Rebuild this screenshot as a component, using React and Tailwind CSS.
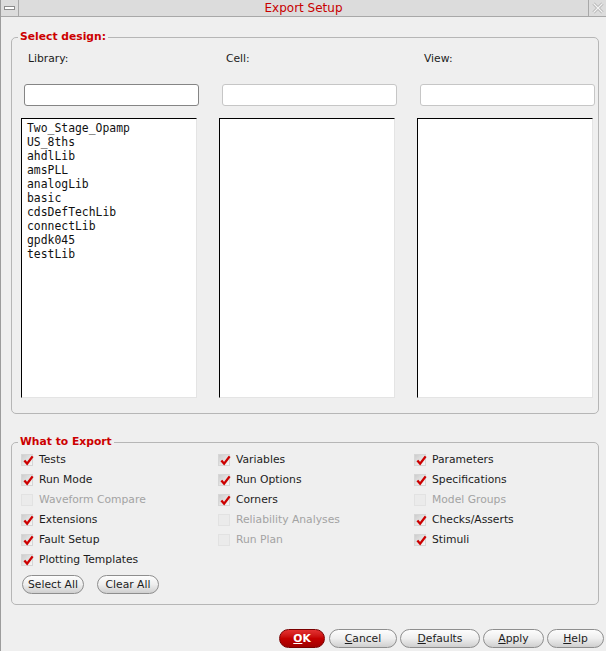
import React from 'react';

const libraries = [
  'Two_Stage_Opamp',
  'US_8ths',
  'ahdlLib',
  'amsPLL',
  'analogLib',
  'basic',
  'cdsDefTechLib',
  'connectLib',
  'gpdk045',
  'testLib',
];

const exportCols = [
  [
    { label: 'Tests', checked: true },
    { label: 'Run Mode', checked: true },
    { label: 'Waveform Compare', disabled: true },
    { label: 'Extensions', checked: true },
    { label: 'Fault Setup', checked: true },
    { label: 'Plotting Templates', checked: true },
  ],
  [
    { label: 'Variables', checked: true },
    { label: 'Run Options', checked: true },
    { label: 'Corners', checked: true },
    { label: 'Reliability Analyses', disabled: true },
    { label: 'Run Plan', disabled: true },
  ],
  [
    { label: 'Parameters', checked: true },
    { label: 'Specifications', checked: true },
    { label: 'Model Groups', disabled: true },
    { label: 'Checks/Asserts', checked: true },
    { label: 'Stimuli', checked: true },
  ],
];

function Check({ label, checked, disabled }) {
  return (
    <div className="flex items-center h-[20px] gap-[6px]">
      <span
        className={`relative w-[12px] h-[12px] shrink-0 ${
          disabled
            ? 'bg-[#ebebeb] border border-[#e2e2e2]'
            : 'bg-linear-to-br from-[#cdcdcd] to-[#f6f6f6] border border-[#d6d6d6]'
        }`}
      >
        {checked && (
          <svg className="absolute left-[1px] top-[0px]" width="11" height="11" viewBox="0 0 12 12">
            <path d="M1.5 6 L4.5 9.5 L10.5 1.5" fill="none" stroke="#cc0000" strokeWidth="2.6" />
          </svg>
        )}
      </span>
      <span className={disabled ? 'text-[#a3a3a3]' : 'text-[#1c1c1c]'}>{label}</span>
    </div>
  );
}

function Btn({ children, className = '' }) {
  return (
    <button
      className={`h-[19px] rounded-full border border-[#8e8e8e] bg-linear-to-b from-[#fdfdfd] via-[#eeeeee] to-[#cfcfcf] text-[10.75px] leading-[17px] text-[#1c1c1c] ${className}`}
    >
      {children}
    </button>
  );
}

export default function App() {
  return (
    <div className="w-[606px] h-[651px] bg-[#efefef] border-l border-[#9c9c9c] font-['DejaVu_Sans',sans-serif] text-[10.75px] text-[#1c1c1c] flex flex-col overflow-hidden">
      {/* title bar */}
      <div className="h-[17px] flex bg-[#dcdcdc] border-b border-[#a8a8a8] shrink-0">
        <div className="w-[18px] border-r border-[#a8a8a8] flex items-center justify-center">
          <span className="w-[11px] h-[4px] bg-white border border-[#8c8c8c]" />
        </div>
        <div className="flex-1 text-center text-[12px] leading-[16px] text-[#c80000]">Export Setup</div>
        <div className="w-[18px] border-l border-[#a8a8a8] flex items-center justify-center">
          <svg width="12" height="12" viewBox="0 0 12 12">
            <path d="M1.5 1.5 L10.5 10.5 M10.5 1.5 L1.5 10.5" stroke="#b4b4b4" strokeWidth="3" />
            <path d="M1.5 1.5 L10.5 10.5 M10.5 1.5 L1.5 10.5" stroke="#f4f4f4" strokeWidth="1.2" />
          </svg>
        </div>
      </div>

      <div className="pl-[10px] pr-[7px]">
        {/* Select design */}
        <fieldset className="mt-[13px] border border-[#b6b6b6] rounded-[5px] pl-[9px] pr-[3px] pb-[15px]">
          <legend className="ml-[-3px] px-[2px] text-[10.75px] leading-[14px] font-bold text-[#cc0000]">Select design:</legend>
          <div className="flex gap-[22px]">
            {['Library:', 'Cell:', 'View:'].map((title, i) => (
              <div key={title} className="w-[176px] flex flex-col">
                <div className="mt-[8px] ml-[7px] leading-[13px]">{title}</div>
                <div
                  className={`mt-[19px] ml-[3px] w-[175px] h-[22px] bg-white rounded-[3px] border ${
                    i === 0 ? 'border-[#858585]' : 'border-[#c6c6c6]'
                  }`}
                />
                <div className="mt-[12px] h-[280px] bg-white border-t border-l border-black border-r border-b border-r-[#e4e4e4] border-b-[#e4e4e4] pt-[2px] pl-[5px] font-['DejaVu_Sans_Mono',monospace] text-[11.4px] leading-[14px] text-[#111]">
                  {i === 0 && libraries.map((lib) => <div key={lib}>{lib}</div>)}
                </div>
              </div>
            ))}
          </div>
        </fieldset>

        {/* What to Export */}
        <fieldset className="mt-[21px] border border-[#b6b6b6] rounded-[5px] pl-[9px] pb-[10px]">
          <legend className="ml-[-3px] px-[2px] text-[10.75px] leading-[14px] font-bold text-[#cc0000]">What to Export</legend>
          <div className="flex mt-[1px]">
            {exportCols.map((col, i) => (
              <div key={i} className={i === 0 ? 'w-[197px]' : i === 1 ? 'w-[196px]' : 'flex-1'}>
                {col.map((c) => (
                  <Check key={c.label} {...c} />
                ))}
              </div>
            ))}
          </div>
          <div className="flex gap-[13px] mt-[5px] ml-[1px]">
            <Btn className="w-[62px] h-[18px] leading-[16px]">Select All</Btn>
            <Btn className="w-[62px] h-[18px] leading-[16px]">Clear All</Btn>
          </div>
        </fieldset>
      </div>

      {/* dialog buttons */}
      <div className="flex justify-end gap-[3px] pr-[2px] mt-[24px]">
        <button className="w-[46px] h-[19px] mr-[1px] rounded-full border border-[#7a0000] bg-linear-to-b from-[#e43030] via-[#c40000] to-[#a00000] text-white font-bold text-[10.75px] leading-[17px]">
          <span className="underline">O</span>K
        </button>
        <Btn className="w-[68px]">
          <span className="underline">C</span>ancel
        </Btn>
        <Btn className="w-[80px]">
          <span className="underline">D</span>efaults
        </Btn>
        <Btn className="w-[61px]">
          <span className="underline">A</span>pply
        </Btn>
        <Btn className="w-[57px]">
          <span className="underline">H</span>elp
        </Btn>
      </div>
    </div>
  );
}
